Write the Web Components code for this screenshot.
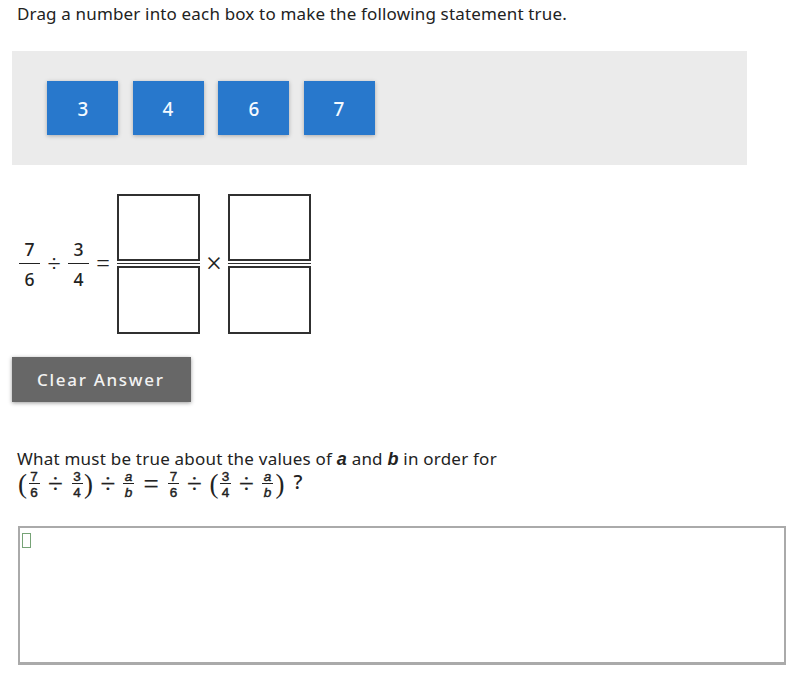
<!DOCTYPE html>
<html lang="en">
<head>
<meta charset="utf-8">
<title>Fraction division</title>
<style>
html,body{margin:0;background:#fff}
body{font-family:"Noto Sans","Open Sans",sans-serif;color:#222}
</style>
</head>
<body>
<exercise-page></exercise-page>
<script>
const define = (name, markup) => {
  const template = document.createElement('template');
  template.innerHTML = markup;
  customElements.define(name, class extends HTMLElement {
    constructor() {
      super();
      this.attachShadow({ mode: 'open' }).append(template.content.cloneNode(true));
    }
  });
};

define('prompt-text', `
<style>
:host{display:block;font-size:17px;line-height:22px;white-space:nowrap;letter-spacing:var(--track,0)}
</style><slot></slot>`);

define('number-tile', `
<style>
:host{display:flex;align-items:center;justify-content:center;box-sizing:border-box;width:71px;height:54px;
background:#2878cc;color:#f4faff;font-size:20.5px;font-weight:500;line-height:24px;box-shadow:0 1px 4px rgba(0,0,0,.28)}
span{transform:scaleX(.92)}
</style><span><slot></slot></span>`);

define('tile-tray', `
<style>
:host{display:flex;gap:14.6px;box-sizing:border-box;width:735px;height:114px;padding:30px 35px;background:#ebebeb}
</style><slot></slot>`);

define('stacked-fraction', `
<style>
:host{display:grid;grid-template-rows:29px 1px 30px;width:21px;text-align:center;font-size:17.5px;font-weight:500;line-height:30px}
.bar{background:#222}
.den{line-height:31px}
</style><div><slot name="n"></slot></div><div class="bar"></div><div class="den"><slot name="d"></slot></div>`);

define('drop-fraction', `
<style>
:host{display:grid;grid-template-rows:67px 1px 68px;row-gap:2px;width:83px}
.box{border:2px solid #303030}
.bar{background:#303030}
</style><div class="box"></div><div class="bar"></div><div class="box"></div>`);

define('math-sign', `
<style>
:host{display:flex;align-items:center;justify-content:center;width:var(--w);height:28px;font-size:var(--size,20px);line-height:28px;color:#222;font-family:"Liberation Serif",serif}
</style><slot></slot>`);

define('equation-row', `
<style>
:host{display:flex;align-items:center;height:140px}
</style><slot></slot>`);

define('clear-button', `
<style>
:host{display:block}
button{display:block;box-sizing:border-box;width:179px;height:45px;margin:0;padding:1px 0 0 25px;border:0;background:#676767;color:#f2f2f2;
font:500 17px/44px "Noto Sans",sans-serif;letter-spacing:1.7px;text-align:left;white-space:nowrap;box-shadow:0 1px 4px rgba(0,0,0,.4)}
</style><button type="button"><slot></slot></button>`);

define('small-fraction', `
<style>
:host{display:grid;grid-template-rows:15px 1px 16px;justify-content:center;grid-template-columns:11px;font:13.5px/15px "Liberation Sans",sans-serif;-webkit-text-stroke:.45px #222;text-align:center;color:#222}
.bar{background:#222}
.num{line-height:17px}
.den{padding-top:1px}
</style><div class="num"><slot name="n"></slot></div><div class="bar"></div><div class="den"><slot name="d"></slot></div>`);

define('inline-equation', `
<style>
:host{display:grid;grid-template-columns:11px 12px 31px 12px 11px 28px 13px 32px 13px 29px 10px 13px 29px 13px 12px 24px;align-items:center;height:32px;
--w:auto;--size:27px}
</style><slot></slot>`);

define('answer-box', `
<style>
:host{display:block;box-sizing:border-box;width:768px;height:139px;border:2px solid #aaa;border-bottom-width:3px;padding:5px 2px}
i{display:block;box-sizing:border-box;width:9px;height:15px;border:1.5px solid #76a376}
</style><i></i>`);

define('exercise-page', `
<style>
:host{display:flex;flex-direction:column;align-items:flex-start;box-sizing:border-box;width:795px;height:677px;overflow:hidden;padding:3px 0 0 12px}
.p1{margin-left:5px;--track:.16px}
tile-tray{margin-top:26px}
equation-row{margin:29px 0 0 7px}
clear-button{margin-top:23px}
.p2{margin:46px 0 0 5px;--track:.22px}
inline-equation{margin:-2px 0 0 5px}
answer-box{margin:26px 0 0 6px}
.paren{--size:27px;margin-top:-1px}
.op{margin-top:-1px;-webkit-text-stroke:.2px #222}
.q{font-family:"Noto Sans",sans-serif;font-weight:500;--size:20px;margin-top:-4px}
b{font-family:"Liberation Sans",sans-serif;font-size:18px;line-height:1}
equation-row math-sign{margin-top:-2px}
</style>
<prompt-text class="p1">Drag a number into each box to make the following statement true.</prompt-text>
<tile-tray><number-tile>3</number-tile><number-tile>4</number-tile><number-tile>6</number-tile><number-tile>7</number-tile></tile-tray>
<equation-row>
<stacked-fraction><span slot="n">7</span><span slot="d">6</span></stacked-fraction>
<math-sign style="--w:28px;--size:24px">÷</math-sign>
<stacked-fraction><span slot="n">3</span><span slot="d">4</span></stacked-fraction>
<math-sign style="--w:28px;--size:24px">=</math-sign>
<drop-fraction></drop-fraction>
<math-sign style="--w:28px;--size:29px">×</math-sign>
<drop-fraction></drop-fraction>
</equation-row>
<clear-button>Clear Answer</clear-button>
<prompt-text class="p2">What must be true about the values of <b><i>a</i></b> and <b><i>b</i></b> in order for</prompt-text>
<inline-equation>
<math-sign class="paren">(</math-sign>
<small-fraction><span slot="n">7</span><span slot="d">6</span></small-fraction>
<math-sign class="op">÷</math-sign>
<small-fraction><span slot="n">3</span><span slot="d">4</span></small-fraction>
<math-sign class="paren">)</math-sign>
<math-sign class="op">÷</math-sign>
<small-fraction><i slot="n">a</i><i slot="d">b</i></small-fraction>
<math-sign class="op">=</math-sign>
<small-fraction><span slot="n">7</span><span slot="d">6</span></small-fraction>
<math-sign class="op">÷</math-sign>
<math-sign class="paren">(</math-sign>
<small-fraction><span slot="n">3</span><span slot="d">4</span></small-fraction>
<math-sign class="op">÷</math-sign>
<small-fraction><i slot="n">a</i><i slot="d">b</i></small-fraction>
<math-sign class="paren">)</math-sign>
<math-sign class="q">?</math-sign>
</inline-equation>
<answer-box></answer-box>
`);
</script>
</body>
</html>
